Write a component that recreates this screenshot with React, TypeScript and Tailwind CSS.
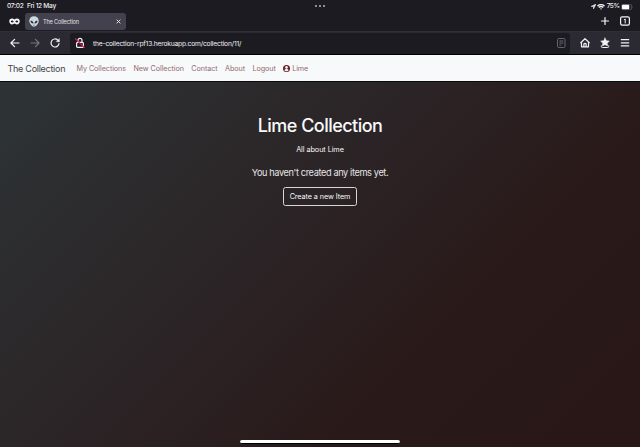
import type { ReactNode } from "react";

function Glyph({ children, className = "" }: { children: ReactNode; className?: string }) {
  return (
    <svg viewBox="0 0 12 12" fill="none" stroke="currentColor" strokeWidth="1.2" strokeLinecap="round" strokeLinejoin="round" className={"block size-3 shrink-0 " + className}>
      {children}
    </svg>
  );
}

function StatusBar() {
  return (
    <div className="grid h-[11px] grid-cols-3 items-center pl-[7px] pr-[7px] text-[6.6px] font-medium leading-[11px] text-[#ededf0]">
      <div className="flex gap-[5px] whitespace-nowrap pt-px tracking-[-0.28px]"><span className="w-[15px]">07:02</span><span>Fri 12 May</span></div>
      <div className="flex justify-center gap-[1.5px]">
        <i className="size-[2.3px] rounded-full bg-[#b4b4b8]" />
        <i className="size-[2.3px] rounded-full bg-[#b4b4b8]" />
        <i className="size-[2.3px] rounded-full bg-[#b4b4b8]" />
      </div>
      <div className="flex items-center justify-end gap-[1.5px] pt-px">
        <svg viewBox="0 0 10 10" className="size-[5px]" fill="currentColor"><path d="M10 0 0 4.800h5V10z" stroke="currentColor" /></svg>
        <svg viewBox="0 0 16 12" className="h-[6px] w-[8px]" fill="none" stroke="currentColor" strokeWidth="2.800"><path d="M1 4.200q7-6 14 0M3.600 7q4.400-3.700 8.800 0" /><path d="m8 11.500-2-2.200q2-1.500 4 0z" fill="currentColor" stroke="none" /></svg>
        <span className="tracking-[-0.5px]">75%</span>
        <svg viewBox="0 0 24 12" className="h-[6px] w-[12px]"><rect x=".7" y=".7" width="20.600" height="10.600" rx="3" fill="none" stroke="#77777c" strokeWidth="1.200" /><rect x="2" y="1.500" width="14.500" height="9" rx="1.800" fill="#fff" /><path d="M22.500 4q1.500 2 0 4" fill="#77777c" /></svg>
      </div>
    </div>
  );
}

function TabStrip() {
  return (
    <div className="flex h-[20px] items-center pl-[9px] pr-[9px] text-[#f5f5f7]">
      <svg viewBox="0 0 22 14" className="h-[7px] w-[11px] shrink-0"><path fill="currentColor" fillRule="evenodd" d="M6 1c2 0 3.500.8 5 1.800C12.500 1.800 14 1 16 1c3.500 0 5.500 2 5.500 5.500S19 13 16 13c-2.300 0-3.500-2-5-2s-2.700 2-5 2C3 13 .5 10 .5 6.500S2.500 1 6 1zM3.500 7c1 2.500 4.500 2.500 6 0-1.500-2.500-5-2.500-6 0zm9 0c1.500 2.500 5 2.500 6 0-1-2.500-4.500-2.500-6 0z" /></svg>
      <div className="ml-[5px] flex h-[17px] w-[101px] items-center rounded-[3px] bg-[#42414d] pl-[4px] pr-[5px]">
        <svg viewBox="0 0 20 22" className="h-[11px] w-[10px] shrink-0"><path d="M10 .5c5.500 0 9.500 3.600 9.500 9C19.500 15 14 21.500 10 21.500S.5 15 .5 9.500c0-5.400 4-9 9.500-9z" fill="#cbd8df" /><path d="M3 9.500c3-.7 5.500 1.300 6 5.500-3 .3-5.700-1.500-6-5.500zM17 9.500c-3-.7-5.500 1.300-6 5.500 3 .3 5.700-1.500 6-5.500z" fill="#26262e" /><path d="M8 18q2 1.500 4 0" stroke="#44505a" fill="none" /></svg>
        <span className="ml-[4px] whitespace-nowrap pt-[2px] text-[5.600px] tracking-[-0.16px] text-[#e4e3e9]">The Collection</span>
        <svg viewBox="0 0 6 6" className="ml-auto size-[5px]" fill="none" stroke="currentColor" strokeWidth="1"><path d="m.7.7 4.600 4.600m0-4.600L.7 5.300" /></svg>
      </div>
      <Glyph className="ml-auto"><path d="M6 2.500v7M2.500 6h7" /></Glyph>
      <Glyph className="ml-[8px]"><rect x="1.600" y="1.900" width="8.800" height="8.200" rx="1.600" /><path d="m5.200 4.700 1-.7v4" strokeWidth="1" /></Glyph>
    </div>
  );
}

function AddressBar() {
  return (
    <div className="flex h-[24px] items-center border-b border-t border-b-black border-t-[#302f38] bg-[#2b2a33] pl-[9px] text-[#f2f2f5]">
      <Glyph><path d="M10 6H2m3.600-3.700L1.900 6l3.700 3.700" /></Glyph>
      <Glyph className="ml-[8px] text-[#777680]"><path d="M2 6h8M6.400 2.300 10.100 6 6.400 9.700" /></Glyph>
      <Glyph className="ml-[8px]"><path d="M10 6.500A4 4 0 1 1 8.700 3L10 4.200" /><path d="M10.300 1.700v3H7.300z" fill="currentColor" strokeWidth=".4" /></Glyph>
      <div className="ml-[9px] flex h-[21px] w-[500px] items-center rounded-[3px] bg-[#1c1b22] pl-[4px] pr-[3px]">
        <Glyph><path d="M4 5V3.400a2 2 0 0 1 4 0V5" /><rect x="2.600" y="5.400" width="6.800" height="5" rx="1" /><path d="m1.300 1.700 9 8.800" stroke="#e7194a" strokeWidth="1.100" /></Glyph>
        <span className="ml-[7px] whitespace-nowrap pt-[2px] text-[6.700px] leading-none tracking-[-0.185px]">the-collection-rpf13.herokuapp.com/collection/11/</span>
        <svg viewBox="0 0 12 12" className="ml-auto size-[12px] text-[#66656d]" fill="none" stroke="currentColor" strokeWidth="1"><rect x="2.500" y="1.500" width="7.500" height="9" rx="1.200" /><path d="M4.300 4h4M4.300 6h4M4.300 8h2" /></svg>
      </div>
      <Glyph className="ml-[9px]"><path d="m1.700 5.700 4.300-4 4.300 4M2.500 5v4.800h7V5M4.900 9.600V7q1.100-1.300 2.200 0v2.600" /></Glyph>
      <Glyph className="ml-[8px]"><path d="m6 1 1.350 2.700 3 .4-2.150 2.100.5 2.800L6 7.700 3.300 9l.5-2.800-2.150-2.100 3-.4z" fill="currentColor" strokeWidth=".5" /><path d="M2.300 8.800v.7q0 1 1 1h5.400q1 0 1-1v-.7" strokeWidth="1" /></Glyph>
      <Glyph className="ml-[8px]"><path d="M2.300 2.700h7.400M2.300 5.800h7.400M2.300 8.900h7.400" /></Glyph>
    </div>
  );
}

function UserIcon() {
  return (
    <svg viewBox="0 0 16 16" className="size-[7px]"><circle cx="8" cy="8" r="8" fill="#691d24" /><circle cx="8" cy="5.500" r="3" fill="#f8f9fa" /><path d="M3 12q1-3 5-3t5 3q-5 4-10 0" fill="#f8f9fa" /></svg>
  );
}

function Navigation() {
  return (
    <nav className="flex h-[27px] items-center border-b border-[#090b0b] bg-[#f8f9fa] pl-[7.500px] pt-[2px] text-[7.200px] text-[#906c6f]">
      <a className="w-[69px] whitespace-nowrap text-[9px] tracking-[-0.27px] text-[#404346]">The Collection</a>
      <div className="flex items-center gap-[7.400px] whitespace-nowrap tracking-[-0.06px]">
        <a>My Collections</a><a>New Collection</a><a>Contact</a><a>About</a><a>Logout</a>
        <a className="flex items-center gap-[2px]"><UserIcon />Lime</a>
      </div>
    </nav>
  );
}

export default function App() {
  return (
    <div className="relative flex h-[447px] w-[640px] flex-col overflow-hidden bg-[#1c1b22] font-['Inter','Liberation_Sans',sans-serif]">
      <StatusBar />
      <TabStrip />
      <AddressBar />
      <Navigation />
      <main className="flex min-h-0 flex-1 flex-col items-center bg-[linear-gradient(135deg,#2d3436_0%,#2c2a2c_25%,#2b2123_50%,#291918_70%,#281716_100%)] pt-[32px] text-[#f8f9fa]">
        <h1 className="whitespace-nowrap text-[18px] font-medium leading-6 tracking-[-0.53px]">Lime Collection</h1>
        <p className="mt-[6px] text-[7.300px] leading-3 tracking-[-0.08px]">All about Lime</p>
        <p className="mt-[9px] whitespace-nowrap text-[9.200px] leading-4 tracking-[-0.38px] text-[#e6e5e6]">You haven't created any items yet.</p>
        <button className="mt-[6px] h-[19px] w-[74px] whitespace-nowrap rounded-[2.500px] border border-[#d7d7d7] text-[7.200px] leading-none tracking-[-0.06px]">Create a new Item</button>
      </main>
      <div className="absolute bottom-[3px] left-[240px] h-[4px] w-[160px] rounded-full border-b border-black bg-white" />
    </div>
  );
}
